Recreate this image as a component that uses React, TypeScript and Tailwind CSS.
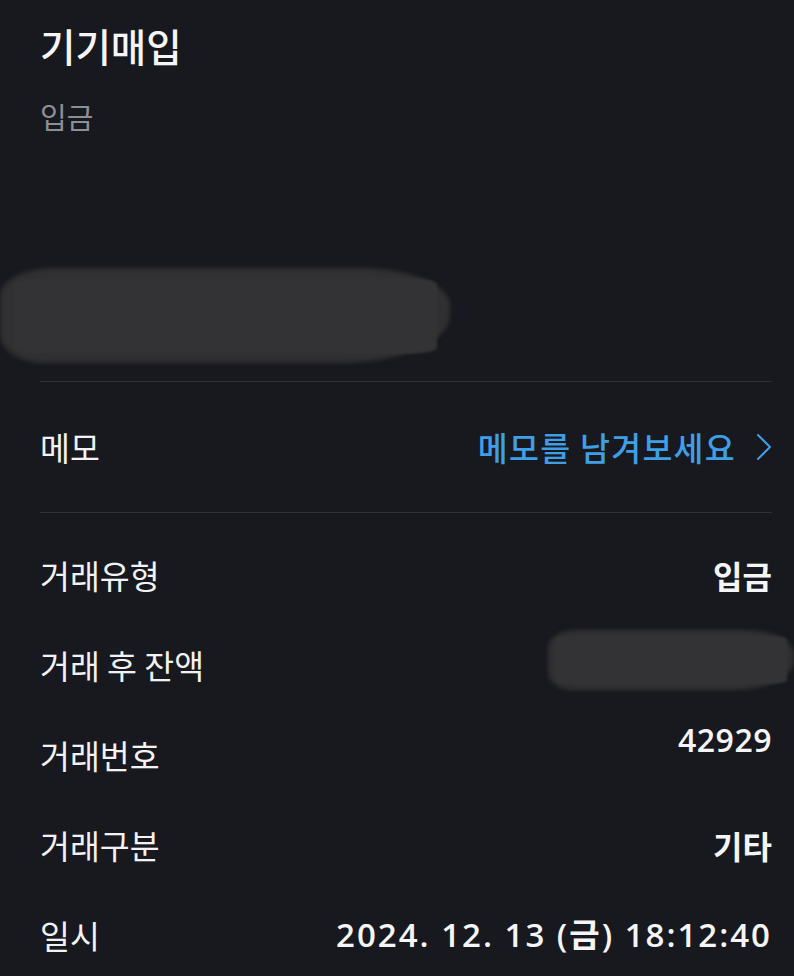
const font = { fontFamily: '"Noto Sans CJK KR", "Noto Sans", sans-serif' };
const numFont = { fontFamily: '"Open Sans", "Noto Sans CJK KR", sans-serif' };

function Smudge({ className }: { className: string }) {
  return (
    <div className={"relative " + className}>
      <div className="absolute inset-0 rounded-[12%_20%_25%_10%/30%_40%_50%_30%] bg-[#303032] blur-[2px]" />
      <div className="absolute inset-[10%_3%] rounded-[8%] bg-[#333335] blur-[1px]" />
    </div>
  );
}

function Row({ label, children }: { label: string; children: React.ReactNode }) {
  return (
    <div className="flex h-[90px] items-center justify-between">
      <span className="text-[32.5px] text-[#f2f2f4]">{label}</span>
      {children}
    </div>
  );
}

export default function App() {
  return (
    <div className="min-h-[976px] w-[794px] overflow-hidden bg-[#18191e] pl-[40px] pr-[22px]" style={font}>
      <div className="pt-[22px]">
        <h1 className="h-[46px] text-[38.5px] font-medium leading-[46px] text-[#f5f5f7]">기기매입</h1>
        <p className="mt-[28px] h-[40px] text-[29px] leading-[40px] text-[#8e8f95]">입금</p>
      </div>
      <Smudge className="-ml-[40px] mt-[132px] h-[95px] w-[450px]" />
      <div className="mt-[18px] h-px bg-[#2f3137]" />
      <div className="flex h-[130px] items-center justify-between">
        <span className="text-[32.5px] text-[#f2f2f4]">메모</span>
        <span className="flex items-center gap-[20px] text-[32.5px] font-medium tracking-[1.3px] text-[#3f9fe6]">
          메모를 남겨보세요
          <svg width="16" height="28" viewBox="0 0 16 28" fill="none">
            <path d="M2 2 L14 14 L2 26" stroke="#3f9fe6" strokeWidth="2" strokeLinecap="round" strokeLinejoin="round" />
          </svg>
        </span>
      </div>
      <div className="h-px bg-[#2f3137]" />
      <div className="pt-[17px]">
        <Row label="거래유형">
          <span className="text-[32px] font-semibold text-[#f5f5f7]">입금</span>
        </Row>
        <Row label="거래 후 잔액">
          <Smudge className="-mr-[22px] -mt-[10px] h-[60px] w-[246px]" />
        </Row>
        <Row label="거래번호">
          <span className="-mt-[30px] text-[32px] font-semibold tracking-[0.5px] text-[#f5f5f7]" style={numFont}>42929</span>
        </Row>
        <Row label="거래구분">
          <span className="text-[32px] font-semibold text-[#f5f5f7]">기타</span>
        </Row>
        <Row label="일시">
          <span className="text-[33px] font-semibold tracking-[2px] text-[#f5f5f7]" style={numFont}>2024. 12. 13 (금) 18:12:40</span>
        </Row>
      </div>
    </div>
  );
}
